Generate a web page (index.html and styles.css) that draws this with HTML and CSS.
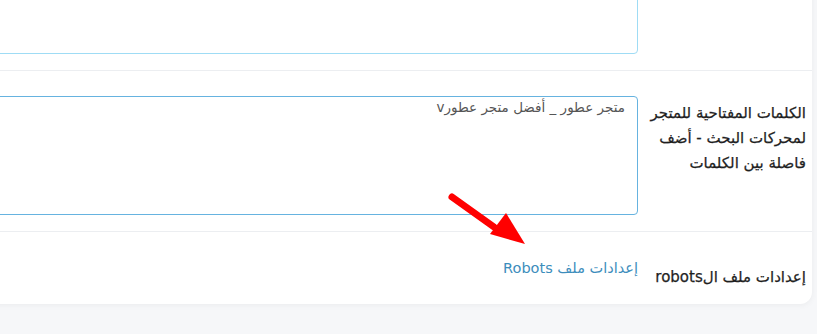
FILE: index.html
```html
<!DOCTYPE html>
<html lang="ar">
<head>
<meta charset="utf-8">
<link rel="stylesheet" href="styles.css">
</head>
<body>
<div class="card">
  <div class="row">
    <div class="label"></div>
    <div class="field"><textarea class="input"></textarea></div>
  </div>
  <div class="row">
    <div class="label">الكلمات المفتاحية للمتجر لمحركات البحث - أضف فاصلة بين الكلمات</div>
    <div class="field"><textarea class="input focus">متجر عطور _ أفضل متجر عطورv</textarea></div>
  </div>
  <div class="row last">
    <div class="label">إعدادات ملف الrobots</div>
    <div class="field"><a class="link" href="#">إعدادات ملف Robots</a></div>
  </div>
  <svg class="arrow" width="80" height="60" viewBox="0 0 80 60">
    <line x1="4" y1="4" x2="46" y2="34" stroke="#ff0000" stroke-width="7" stroke-linecap="round"/>
    <polygon points="58,20 42,41 77,51" fill="#ff0000"/>
  </svg>
</div>
</body>
</html>
```

FILE: styles.css
```css
html, body {
  margin: 0;
  padding: 0;
  overflow: hidden;
  background: #f6f7f9;
  height: 334px;
}
body {
  padding-right: 5px;
  font-family: "DejaVu Sans", "Noto Sans", sans-serif;
}
.card {
  position: relative;
  margin-top: -90px;
  margin-left: -400px;
  background: #fff;
  border-radius: 0 0 12px 0;
  box-shadow: 0 1px 6px rgba(0, 0, 0, 0.05);
  direction: rtl;
}
.row {
  display: grid;
  grid-template-columns: 162px 1fr;
  column-gap: 12px;
  border-bottom: 1px solid #eceef1;
}
.row.last {
  border-bottom: none;
  height: 72px;
}
.label {
  padding: 30px 6px 0 0;
  font-size: 15px;
  line-height: 25px;
  color: #1f1f1f;
  font-weight: normal;
  -webkit-text-stroke: 0.25px #1f1f1f;
}
.row.last .label {
  padding-top: 33px;
}
.field {
  padding: 25px 0 16px 0;
}
.row.last .field {
  padding-top: 26px;
}
.input {
  display: block;
  box-sizing: border-box;
  width: 100%;
  height: 119px;
  margin: 0;
  padding: 2px 12px;
  border: 1px solid #9fdcf5;
  border-radius: 4px;
  font-family: "DejaVu Sans", sans-serif;
  font-size: 13.5px;
  color: #555;
  resize: none;
  background: #fff;
}
.input.focus {
  border-color: #66b3e0;
}
.link {
  font-size: 14.5px;
  color: #3c8dbc;
  text-decoration: none;
}
.arrow {
  position: absolute;
  left: 848px;
  top: 283px;
}
```
